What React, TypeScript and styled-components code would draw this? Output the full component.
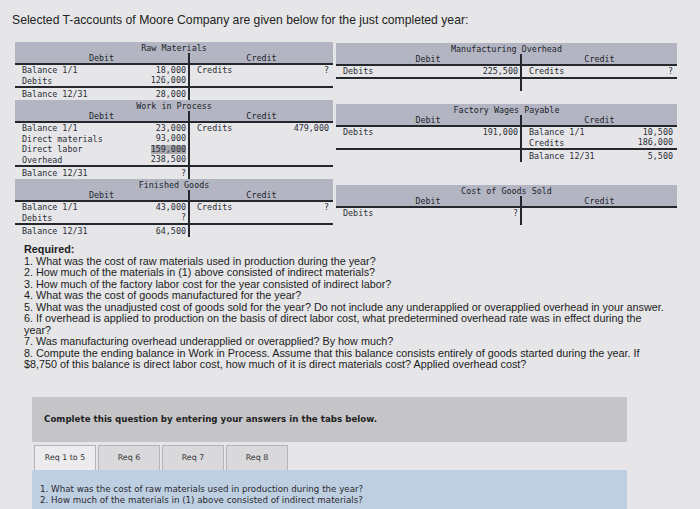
import React from 'react';
import styled, { createGlobalStyle } from 'styled-components';

const GlobalStyle = createGlobalStyle`
  html, body {
    margin: 0;
    padding: 0;
    background: #e6e6e8;
  }
  body {
    width: 700px;
    height: 509px;
    overflow: hidden;
    font-family: "Liberation Sans", Arial, sans-serif;
    color: #1e1e1e;
  }
`;

const Page = styled.div`
  width: 700px;
  height: 509px;
  box-sizing: border-box;
  padding-top: 13px;
  overflow: hidden;
`;

const Intro = styled.p`
  margin: 0 0 0 12px;
  font-size: 12.2px;
  line-height: 14px;
  color: #222;
  white-space: nowrap;
`;

const Accounts = styled.div`
  display: flex;
  align-items: flex-start;
  gap: 3px;
  margin: 15px 0 0 15px;
`;

const Column = styled.div<{ $width: number; $offset?: number }>`
  width: ${(p) => p.$width}px;
  padding-top: ${(p) => p.$offset ?? 0}px;
  display: flex;
  flex-direction: column;
`;

const TBox = styled.div<{ $mt?: number }>`
  margin-top: ${(p) => p.$mt ?? 0}px;
  font-family: "DejaVu Sans Mono", "Liberation Mono", monospace;
  font-size: 8.4px;
  color: #2a2c36;
`;

const THead = styled.div`
  background: #b3b6c2;
  border-bottom: 2px solid #26272d;
  color: #1d1f2b;
`;

const TTitle = styled.div`
  height: 11px;
  line-height: 12px;
  text-align: center;
  white-space: nowrap;
`;

const TGrid = styled.div<{ $split: string; $rule?: boolean }>`
  display: grid;
  grid-template-columns: ${(p) => p.$split};
  border-top: ${(p) => (p.$rule ? '2px solid #26272d' : 'none')};
`;

const HeadLabel = styled.div<{ $divider?: boolean }>`
  height: 10px;
  line-height: 10px;
  text-align: center;
  border-right: ${(p) => (p.$divider ? '2px solid #26272d' : 'none')};
`;

const Cell = styled.div<{ $divider?: boolean; $h: number; $credit?: boolean }>`
  height: ${(p) => p.$h}px;
  line-height: ${(p) => p.$h}px;
  display: flex;
  justify-content: space-between;
  align-items: center;
  padding: ${(p) => (p.$credit ? '0 4px 0 7px' : '0 2px 0 7px')};
  border-right: ${(p) => (p.$divider ? '2px solid #26272d' : 'none')};
  white-space: nowrap;
`;

const Amount = styled.span<{ $hl?: boolean }>`
  background: ${(p) => (p.$hl ? '#a7a8ae' : 'transparent')};
  line-height: 9px;
`;

type Entry = { label?: string; amount?: string; hl?: boolean };
type Account = {
  title: string;
  split: string;
  mt?: number;
  debit: Entry[];
  credit: Entry[];
  balance?: { debit?: Entry; credit?: Entry };
  tail?: number;
};

const ROW = 10.5;

const EntryCell: React.FC<{ e?: Entry; divider?: boolean; credit?: boolean; h: number }> = ({ e, divider, credit, h }) => (
  <Cell $divider={divider} $credit={credit} $h={h}>
    <span>{e?.label ?? ''}</span>
    <Amount $hl={e?.hl}>{e?.amount ?? ''}</Amount>
  </Cell>
);

const TAccount: React.FC<{ acc: Account }> = ({ acc }) => {
  const n = Math.max(acc.debit.length, acc.credit.length);
  const rows = Array.from({ length: n }, (_, i) => i);
  return (
    <TBox $mt={acc.mt}>
      <THead>
        <TTitle>{acc.title}</TTitle>
        <TGrid $split={acc.split}>
          <HeadLabel $divider>Debit</HeadLabel>
          <HeadLabel>Credit</HeadLabel>
        </TGrid>
      </THead>
      {rows.map((i) => (
        <TGrid key={i} $split={acc.split}>
          <EntryCell e={acc.debit[i]} divider h={ROW} />
          <EntryCell e={acc.credit[i]} credit h={ROW} />
        </TGrid>
      ))}
      {acc.balance && (
        <TGrid $split={acc.split} $rule>
          <EntryCell e={acc.balance.debit} divider h={12} />
          <EntryCell e={acc.balance.credit} credit h={12} />
        </TGrid>
      )}
      {acc.tail ? (
        <TGrid $split={acc.split}>
          <EntryCell divider h={acc.tail} />
          <EntryCell credit h={acc.tail} />
        </TGrid>
      ) : null}
    </TBox>
  );
};

const LEFT_SPLIT = '175px 1fr';
const RIGHT_SPLIT = '186px 1fr';

const leftAccounts: Account[] = [
  {
    title: 'Raw Materials',
    split: LEFT_SPLIT,
    debit: [
      { label: 'Balance 1/1', amount: '18,000' },
      { label: 'Debits', amount: '126,000' },
    ],
    credit: [{ label: 'Credits', amount: '?' }],
    balance: { debit: { label: 'Balance 12/31', amount: '28,000' } },
  },
  {
    title: 'Work in Process',
    split: LEFT_SPLIT,
    debit: [
      { label: 'Balance 1/1', amount: '23,000' },
      { label: 'Direct materials', amount: '93,000' },
      { label: 'Direct labor', amount: '159,000', hl: true },
      { label: 'Overhead', amount: '238,500' },
    ],
    credit: [{ label: 'Credits', amount: '479,000' }],
    balance: { debit: { label: 'Balance 12/31', amount: '?' } },
  },
  {
    title: 'Finished Goods',
    split: LEFT_SPLIT,
    debit: [
      { label: 'Balance 1/1', amount: '43,000' },
      { label: 'Debits', amount: '?' },
    ],
    credit: [{ label: 'Credits', amount: '?' }],
    balance: { debit: { label: 'Balance 12/31', amount: '64,500' } },
  },
];

const rightAccounts: Account[] = [
  {
    title: 'Manufacturing Overhead',
    split: RIGHT_SPLIT,
    debit: [{ label: 'Debits', amount: '225,500' }],
    credit: [{ label: 'Credits', amount: '?' }],
    balance: {},
  },
  {
    title: 'Factory Wages Payable',
    split: RIGHT_SPLIT,
    mt: 13.5,
    debit: [{ label: 'Debits', amount: '191,000' }],
    credit: [
      { label: 'Balance 1/1', amount: '10,500' },
      { label: 'Credits', amount: '186,000' },
    ],
    balance: { credit: { label: 'Balance 12/31', amount: '5,500' } },
  },
  {
    title: 'Cost of Goods Sold',
    split: RIGHT_SPLIT,
    mt: 23,
    debit: [{ label: 'Debits', amount: '?' }],
    credit: [],
    tail: 6,
  },
];

const Required = styled.div`
  margin: 7px 0 0 24px;
  font-size: 10.8px;
  line-height: 11.5px;
  color: #1c1c1c;
  white-space: nowrap;
`;

const RequiredTitle = styled.div`
  font-weight: bold;
`;

const Question = styled.div``;

const Band = styled.div`
  margin: 26px 0 0 32px;
  width: 595px;
  height: 45px;
  box-sizing: border-box;
  padding-left: 12px;
  display: flex;
  align-items: center;
  background: #c5c5c8;
  font-family: "DejaVu Sans", Verdana, sans-serif;
  font-weight: bold;
  font-size: 8.7px;
  color: #222;
`;

const Tabs = styled.div`
  display: flex;
  gap: 2px;
  margin: 3px 0 0 34px;
`;

const Tab = styled.div<{ $active?: boolean }>`
  width: 62px;
  height: 25px;
  box-sizing: border-box;
  display: flex;
  align-items: center;
  justify-content: center;
  border: 1px solid #b4b4b8;
  border-bottom: none;
  background: ${(p) => (p.$active ? '#ececee' : '#d9d9dc')};
  font-family: "DejaVu Sans", Verdana, sans-serif;
  font-size: 7.9px;
  color: #333;
`;

const Panel = styled.div`
  margin-left: 32px;
  width: 595px;
  height: 60px;
  box-sizing: border-box;
  padding: 14px 0 0 8px;
  background: #bfcfe2;
  font-family: "DejaVu Sans", Verdana, sans-serif;
  font-size: 8.7px;
  line-height: 11px;
  color: #2a2a2e;
  white-space: nowrap;
`;

const questions: React.ReactNode[] = [
  '1. What was the cost of raw materials used in production during the year?',
  '2. How much of the materials in (1) above consisted of indirect materials?',
  '3. How much of the factory labor cost for the year consisted of indirect labor?',
  '4. What was the cost of goods manufactured for the year?',
  '5. What was the unadjusted cost of goods sold for the year? Do not include any underapplied or overapplied overhead in your answer.',
  <>
    6. If overhead is applied to production on the basis of direct labor cost, what predetermined overhead rate was in effect during the
    <br />
    year?
  </>,
  '7. Was manufacturing overhead underapplied or overapplied? By how much?',
  <>
    8. Compute the ending balance in Work in Process. Assume that this balance consists entirely of goods started during the year. If
    <br />
    $8,750 of this balance is direct labor cost, how much of it is direct materials cost? Applied overhead cost?
  </>,
];

export default function App() {
  return (
    <>
      <GlobalStyle />
      <Page>
        <Intro>Selected T-accounts of Moore Company are given below for the just completed year:</Intro>
        <Accounts>
          <Column $width={318}>
            {leftAccounts.map((a) => (
              <TAccount key={a.title} acc={a} />
            ))}
          </Column>
          <Column $width={341} $offset={1}>
            {rightAccounts.map((a) => (
              <TAccount key={a.title} acc={a} />
            ))}
          </Column>
        </Accounts>
        <Required>
          <RequiredTitle>Required:</RequiredTitle>
          {questions.map((q, i) => (
            <Question key={i}>{q}</Question>
          ))}
        </Required>
        <Band>Complete this question by entering your answers in the tabs below.</Band>
        <Tabs>
          <Tab $active>Req 1 to 5</Tab>
          <Tab>Req 6</Tab>
          <Tab>Req 7</Tab>
          <Tab>Req 8</Tab>
        </Tabs>
        <Panel>
          <div>1. What was the cost of raw materials used in production during the year?</div>
          <div>2. How much of the materials in (1) above consisted of indirect materials?</div>
        </Panel>
      </Page>
    </>
  );
}
